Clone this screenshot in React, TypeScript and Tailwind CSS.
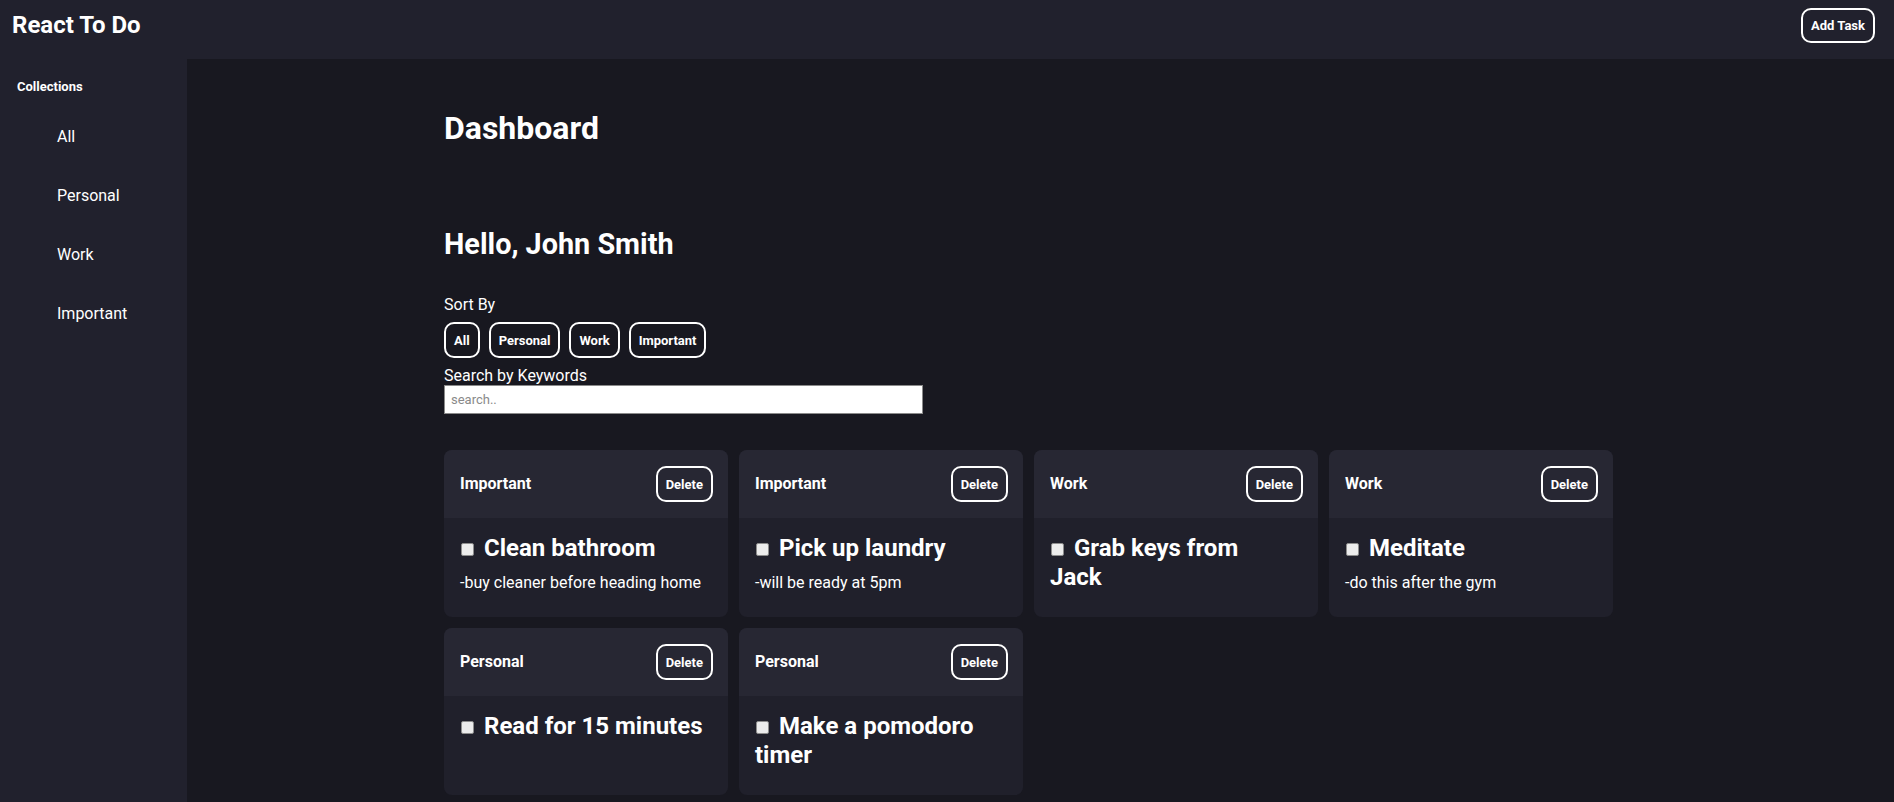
import React from 'react'

const tasks = [
  { id: 1, category: 'Important', title: 'Clean bathroom', note: '-buy cleaner before heading home' },
  { id: 2, category: 'Important', title: 'Pick up laundry', note: '-will be ready at 5pm' },
  { id: 3, category: 'Work', title: 'Grab keys from Jack', note: '' },
  { id: 4, category: 'Work', title: 'Meditate', note: '-do this after the gym' },
  { id: 5, category: 'Personal', title: 'Read for 15 minutes', note: '' },
  { id: 6, category: 'Personal', title: 'Make a pomodoro timer', note: '' },
]

const collections = ['All', 'Personal', 'Work', 'Important']

function OutlineButton({ children }: { children: React.ReactNode }) {
  return (
    <button className="h-[36px] px-2 border-2 border-white rounded-[10px] text-[13px] font-bold text-white leading-none">
      {children}
    </button>
  )
}

function TaskCard({ task }: { task: (typeof tasks)[number] }) {
  return (
    <div className="h-[167px] rounded-lg overflow-hidden bg-[#20202b] flex flex-col">
      <div className="h-[68px] bg-[#272733] flex items-center justify-between pl-4 pr-[15px]">
        <span className="text-base font-bold">{task.category}</span>
        <OutlineButton>Delete</OutlineButton>
      </div>
      <div className="pl-4 pr-[25px] pt-4">
        <h2 className="text-2xl font-bold leading-[29px]">
          <span className="inline-block w-[13px] h-[13px] bg-[#ececec] border border-[#8d8d8d] rounded-[2px] mr-[10px] ml-[1px]" />
          {task.title}
        </h2>
        {task.note && <p className="mt-[10px] text-base leading-[19px]">{task.note}</p>}
      </div>
    </div>
  )
}

export default function App() {
  return (
    <div className="min-h-screen flex flex-col bg-[#181820] text-white font-['Roboto',sans-serif]">
      <header className="h-[59px] shrink-0 bg-[#21212d] flex items-center justify-between pl-3 pr-[19px] pb-[9px]">
        <h1 className="text-2xl font-bold leading-[29px]">React To Do</h1>
        <button className="h-[35px] px-2 border-2 border-white rounded-[10px] text-[13px] font-bold leading-none">
          Add Task
        </button>
      </header>

      <div className="flex flex-1">
        <aside className="w-[187px] shrink-0 bg-[#21212d] pl-[17px] pt-[20px]">
          <h5 className="text-[13px] font-bold leading-[16px]">Collections</h5>
          <ul className="pl-10 mt-8 flex flex-col gap-10">
            {collections.map(c => (
              <li key={c} className="text-base leading-[19px]">{c}</li>
            ))}
          </ul>
        </aside>

        <main className="flex-1 pl-[257px] pt-[50px] pb-[7px]">
          <h1 className="text-[32px] font-bold leading-[38px]">Dashboard</h1>
          <h2 className="mt-[80px] text-[28.8px] font-bold leading-[34px]">Hello, John Smith</h2>

          <p className="mt-[34px] text-base leading-[19px]">Sort By</p>
          <div className="mt-[8px] flex gap-[9px]">
            {collections.map(c => <OutlineButton key={c}>{c}</OutlineButton>)}
          </div>

          <p className="mt-[8px] text-base leading-[19px]">Search by Keywords</p>
          <input
            placeholder="search.."
            className="block w-[479px] h-[29px] bg-white border border-[#8a8a8a] px-[6px] text-[13px] text-black placeholder:text-[#8a8a8a] outline-none"
          />

          <div className="mt-[36px] grid grid-cols-[repeat(4,284px)] gap-[11px]">
            {tasks.map(t => <TaskCard key={t.id} task={t} />)}
          </div>
        </main>
      </div>
    </div>
  )
}
